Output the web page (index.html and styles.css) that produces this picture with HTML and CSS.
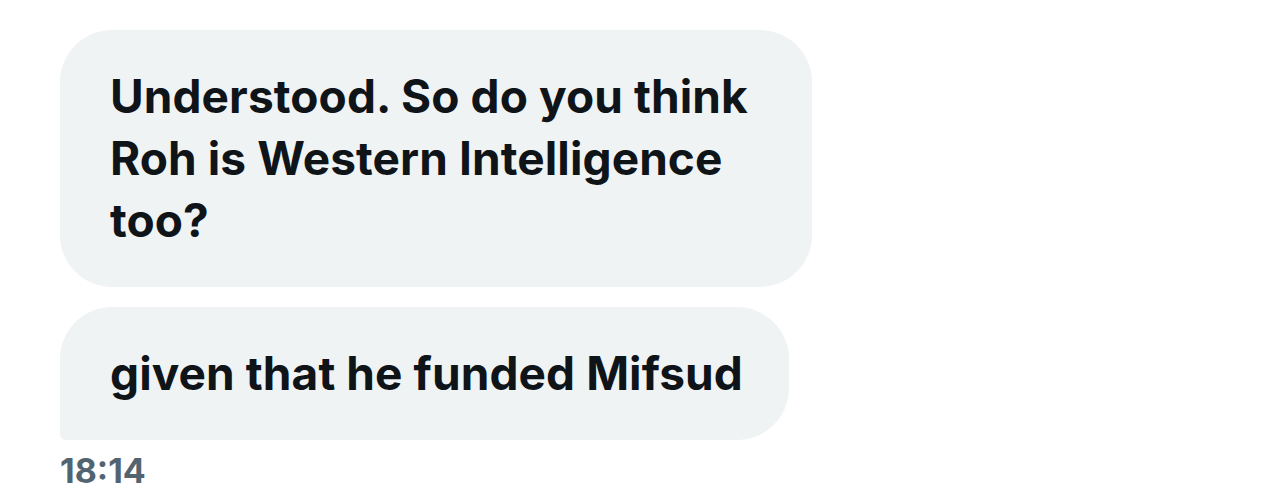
FILE: index.html
```html
<!DOCTYPE html>
<html>
<head>
<meta charset="utf-8">
<link rel="stylesheet" href="styles.css">
</head>
<body>
<div class="thread">
  <div class="bubble bubble-first">Understood. So do you think Roh is Western Intelligence too?</div>
  <div class="bubble bubble-last">given that he funded Mifsud</div>
  <div class="time">18:14</div>
</div>
</body>
</html>
```

FILE: styles.css
```css
html, body {
  margin: 0;
  background: #ffffff;
}
.thread {
  display: flex;
  flex-direction: column;
  align-items: flex-start;
  gap: 20px;
  padding: 30px 0 0 60px;
  font-family: "Inter", "Liberation Sans", sans-serif;
}
.bubble {
  background: #eff3f4;
  color: #0f1419;
  font-weight: 700;
  font-size: 46px;
  letter-spacing: 0.1px;
  line-height: 62px;
  padding: 35px 50px 36px 50px;
  border-radius: 52px;
  box-sizing: border-box;
}
.bubble-first {
  width: 752px;
}
.bubble-last {
  border-bottom-left-radius: 6px;
  padding-right: 46px;
}
.time {
  margin-top: -9px;
  color: #536471;
  font-weight: 700;
  font-size: 34px;
  line-height: 40px;
}
```
